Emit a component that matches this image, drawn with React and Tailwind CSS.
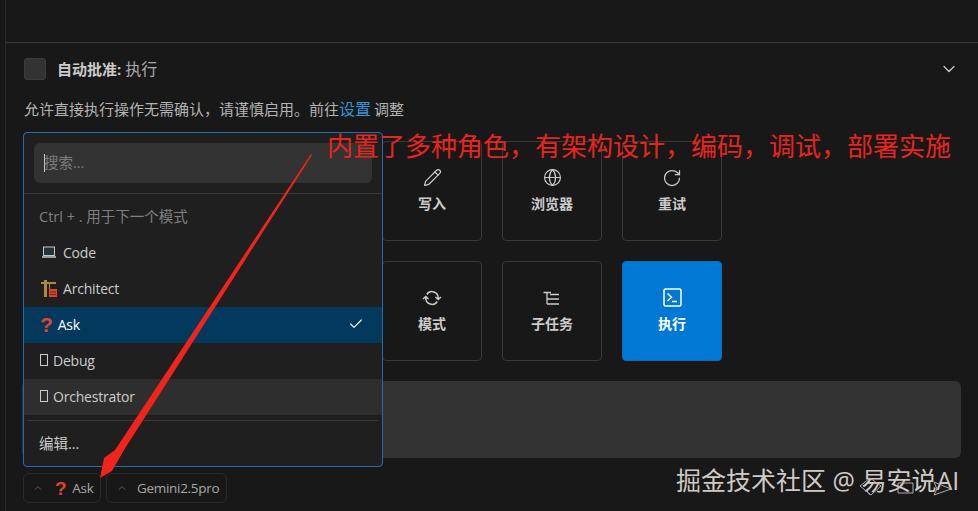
import { Check, ChevronDown, ChevronUp, Globe, Pencil, RotateCw } from "lucide-react";

const FONT = "font-['Open_Sans','Noto_Sans_CJK_SC',sans-serif]";

function SyncIcon() {
  return (
    <svg width="20" height="20" viewBox="0 0 20 20" fill="none" stroke="currentColor" strokeWidth="1.5">
      <path d="M16.2 11.5V10A6.2 6.2 0 0 0 4.8 6.5M3.8 8.5V10A6.2 6.2 0 0 0 15.2 13.5M1 11l2.8-2.5L6.5 11M13.5 9l2.7 2.5L19 9" />
    </svg>
  );
}

function ListTreeIcon() {
  return (
    <svg width="18" height="18" viewBox="0 0 18 18" fill="none" stroke="currentColor" strokeWidth="1.3">
      <path d="M0.5 3.5H8M4 3.5V15M7 5.5H16M4 10H16M4 15H16" />
    </svg>
  );
}

function TerminalIcon() {
  return (
    <svg width="19" height="19" viewBox="0 0 19 19" fill="none" stroke="currentColor" strokeWidth="1.5">
      <rect x="1" y="1" width="17" height="17" rx="1.5" />
      <path d="M4.5 5.5L8.5 9.2 4.5 13M9 13.5H14" />
    </svg>
  );
}

function Tile({ label, icon, active, className = "" }) {
  return (
    <div
      className={`flex h-[100px] w-[100px] flex-col items-center justify-center rounded-sm border pb-[3px] ${
        active ? "border-[#0a6cbd] bg-[#0078d4] text-white" : "border-[#3a3a3a] text-[#cccccc]"
      } ${className}`}
    >
      <span className="flex h-[24px] items-center">{icon}</span>
      <span className="mt-[4px] text-[14px] leading-[20px] font-bold">{label}</span>
    </div>
  );
}

function Tofu() {
  return <span className="inline-block h-[12px] w-[8px] border border-[#cccccc]" />;
}

function Question({ size = "text-[21px]" }) {
  return <span className={`${size} font-['Liberation_Sans'] leading-none font-bold text-[#e0452a]`}>?</span>;
}

function CraneIcon() {
  return (
    <svg width="17" height="17" viewBox="0 0 17 17">
      <path d="M0 2h15v2H0zM3 0h3v17H3zM8 4h1v5H8z" fill="#b08a3c" />
      <rect x="8" y="9" width="8" height="8" fill="#d8452c" />
      <path d="M9 12h6M9 14.5h6" stroke="#5a1d12" strokeWidth="0.8" />
    </svg>
  );
}

function LaptopIcon() {
  return (
    <svg width="16" height="16" viewBox="0 0 16 16" fill="none" stroke="#c8c8c8" strokeWidth="1">
      <rect x="2.5" y="3" width="11" height="8.5" fill="#26323a" />
      <path d="M1 13h14" strokeWidth="1.5" />
    </svg>
  );
}

function ModeRow({ children, className = "" }) {
  return (
    <div className={`flex h-9 items-center px-4 pb-[2px] text-[14px] tracking-[-0.2px] ${className}`}>{children}</div>
  );
}

function ModeMenu() {
  return (
    <div className="absolute top-[132px] left-[23px] flex h-[335px] w-[360px] flex-col rounded-sm border border-[#1f6fb0] bg-[#1f1f1f] text-[#cccccc]">
      <div className="border-b border-[#3a3a3a] p-[10px]">
        <div className="flex h-10 items-center rounded-md bg-[#333333] px-[10px] text-[14.5px] text-[#7d7d7d]">
          <span className="mr-[-1px] h-[18px] w-px bg-[#cccccc]" />
          搜索...
        </div>
      </div>
      <div className="flex h-[41px] items-center px-[15px] pt-[4px] text-[14.5px] text-[#7f7f7f]">Ctrl + . 用于下一个模式</div>
      <ModeRow className="gap-[6px] pl-[17px]">
        <LaptopIcon />
        Code
      </ModeRow>
      <ModeRow className="gap-[5px] pl-[17px]">
        <CraneIcon />
        Architect
      </ModeRow>
      <ModeRow className="justify-between bg-[#04395e] pr-[18px] text-white">
        <span className="flex items-center gap-[5px]">
          <Question />
          Ask
        </span>
        <Check size={16} strokeWidth={1.6} />
      </ModeRow>
      <ModeRow className="gap-[5px]">
        <Tofu />
        Debug
      </ModeRow>
      <ModeRow className="gap-[5px] bg-[#2e2e2e]">
        <Tofu />
        Orchestrator
      </ModeRow>
      <div className="mx-1 mt-[5px] h-px bg-[#3a3a3a]" />
      <div className="flex flex-1 items-center px-[15px] text-[14.5px]">编辑...</div>
    </div>
  );
}

function Overlays() {
  return (
    <>
      <div className="absolute top-[128px] left-[327px] text-[26px] leading-[36px] whitespace-nowrap text-[#e8251c]">
        内置了多种角色，有架构设计，编码，调试，部署实施
      </div>
      <div className="absolute top-[463px] left-[676px] text-[25px] leading-[34px] whitespace-nowrap text-[#cfcac6]">
        掘金技术社区 @ 易安说AI
      </div>
      <svg className="absolute top-0 left-0" width="978" height="511" viewBox="0 0 978 511">
        <path d="M312 155L124 450 112 471 100 478 104 458 115 450 311 154Z" fill="#f0241a" />
        <g fill="none" stroke="#b0aca8" strokeWidth="1">
          <path d="M860 486l10-8 11 8-10 9zM866 490l4 5" />
          <path d="M898 483h15v10h-15z" />
          <path d="M934 482l17 7-17 6 3-6z" />
        </g>
      </svg>
    </>
  );
}

export default function App() {
  return (
    <div className={`relative h-[511px] w-[978px] overflow-hidden bg-[#181818] pl-[5px] ${FONT}`}>
      <div className="h-full border-l border-[#2b2b2b]">
        <div className="h-[43px] border-b border-[#3c3c3c]" />
        <div className="pr-[17px] pl-[16px]">
          <div className="mt-[15px] flex h-[22px] items-center justify-between pl-[2px]">
            <div className="flex items-center gap-[11px] text-[15px] text-[#cccccc]">
              <span className="h-[22px] w-[22px] rounded-[3px] border border-[#3c3c3c] bg-[#333333]" />
              <span>
                <b className="font-bold">自动批准:</b> <span className="text-[16px] text-[#aaaaaa]">执行</span>
              </span>
            </div>
            <ChevronDown size={20} strokeWidth={1.5} className="mr-[2px] text-[#cccccc]" />
          </div>
          <p className="mt-[19px] ml-[2px] text-[15px] leading-[20px] text-[#b4b4b4]">
            允许直接执行操作无需确认，请谨慎启用。前往<span className="text-[16px] text-[#3794d8]">设置</span>
            <span className="ml-[3px]">调整</span>
          </p>
          <div className="mt-[22px] grid grid-cols-[repeat(6,100px)] gap-5">
            <Tile className="col-start-4" label="写入" icon={<Pencil size={19} strokeWidth={1.5} />} />
            <Tile label="浏览器" icon={<Globe size={19} strokeWidth={1.5} />} />
            <Tile label="重试" icon={<RotateCw size={20} strokeWidth={1.5} />} />
            <Tile className="col-start-4" label="模式" icon={<SyncIcon />} />
            <Tile label="子任务" icon={<ListTreeIcon />} />
            <Tile active label="执行" icon={<TerminalIcon />} />
          </div>
          <div className="mt-5 h-[77px] rounded-md bg-[#333333]" />
          <div className="mt-[15px] ml-[1px] flex gap-[5px] text-[13.5px] tracking-[-0.3px] text-[#a8a8a8]">
            <div className="flex h-[30px] w-[78px] items-center gap-[11px] rounded-md border border-[#2a2a2a] pl-[8px]">
              <ChevronUp size={12} strokeWidth={1.2} className="shrink-0 text-[#8a8a8a]" />
              <span className="flex items-center gap-[6px]">
                <Question size="text-[19px]" />
                Ask
              </span>
            </div>
            <div className="flex h-[30px] w-[121px] items-center gap-[9px] rounded-md border border-[#2a2a2a] pl-[9px]">
              <ChevronUp size={12} strokeWidth={1.2} className="shrink-0 text-[#8a8a8a]" />
              Gemini2.5pro
            </div>
          </div>
        </div>
      </div>
      <ModeMenu />
      <Overlays />
    </div>
  );
}
